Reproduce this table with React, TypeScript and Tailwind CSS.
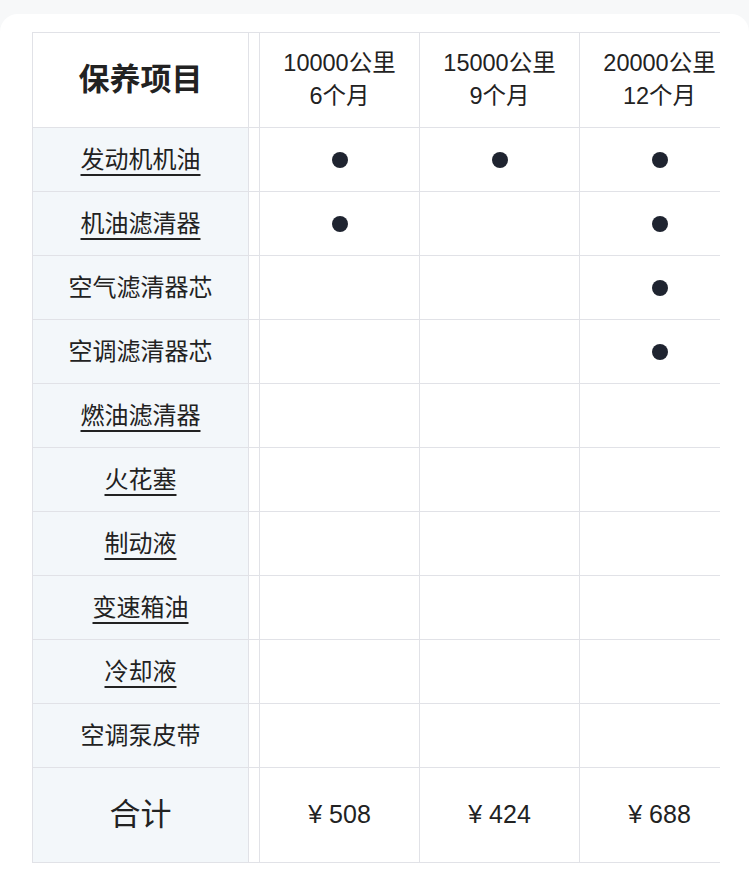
type Item = {
  name: string;
  link?: boolean;
  marks: boolean[];
};

const items: Item[] = [
  { name: "发动机机油", link: true, marks: [true, true, true] },
  { name: "机油滤清器", link: true, marks: [true, false, true] },
  { name: "空气滤清器芯", marks: [false, false, true] },
  { name: "空调滤清器芯", marks: [false, false, true] },
  { name: "燃油滤清器", link: true, marks: [false, false, false] },
  { name: "火花塞", link: true, marks: [false, false, false] },
  { name: "制动液", link: true, marks: [false, false, false] },
  { name: "变速箱油", link: true, marks: [false, false, false] },
  { name: "冷却液", link: true, marks: [false, false, false] },
  { name: "空调泵皮带", marks: [false, false, false] },
];

const plans = [
  { km: "10000公里", months: "6个月", price: "¥ 508" },
  { km: "15000公里", months: "9个月", price: "¥ 424" },
  { km: "20000公里", months: "12个月", price: "¥ 688" },
];

const font = "font-['Liberation_Sans','Noto_Sans_CJK_SC',sans-serif]";

function Row({ head, cells, tall, shaded = true }: { head: React.ReactNode; cells: React.ReactNode[]; tall?: boolean; shaded?: boolean }) {
  return (
    <div className={`flex border-b border-[#e1e2e7] ${tall ? "h-[95px]" : "h-[64px]"}`}>
      <div className={`flex w-[216px] shrink-0 items-center justify-center border-r border-[#e1e2e7] ${shaded ? "bg-[#f3f7fa]" : "bg-white"}`}>
        {head}
      </div>
      <div className="w-[11px] shrink-0 border-r border-[#e1e2e7] bg-white" />
      {cells.map((c, i) => (
        <div key={i} className="flex w-[160px] shrink-0 items-center justify-center border-r border-[#e1e2e7] bg-white">
          {c}
        </div>
      ))}
    </div>
  );
}

export default function App() {
  return (
    <div className={`h-[873px] w-[749px] overflow-hidden bg-[#f7f8f9] ${font} text-[#222]`}>
      <div className="mt-[14px] h-[859px] rounded-t-[18px] bg-white pt-[18px]">
        <div className="ml-8 w-[688px] overflow-hidden border-l border-t border-[#e1e2e7]">
          <Row
            tall
            shaded={false}
            head={<span className="text-[31px] font-bold">保养项目</span>}
            cells={plans.map((p) => (
              <div className="text-center text-[23.5px] leading-[33px]">
                <div>{p.km}</div>
                <div>{p.months}</div>
              </div>
            ))}
          />
          {items.map((it) => (
            <Row
              key={it.name}
              head={
                <span className={`text-[24px] ${it.link ? "underline decoration-2 underline-offset-[6px]" : ""}`}>
                  {it.name}
                </span>
              }
              cells={it.marks.map((m) => (m ? <span className="block h-4 w-4 rounded-full bg-[#1f2430]" /> : null))}
            />
          ))}
          <Row
            tall
            head={<span className="text-[31px]">合计</span>}
            cells={plans.map((p) => (
              <span className="text-[25px]">{p.price}</span>
            ))}
          />
        </div>
      </div>
    </div>
  );
}
